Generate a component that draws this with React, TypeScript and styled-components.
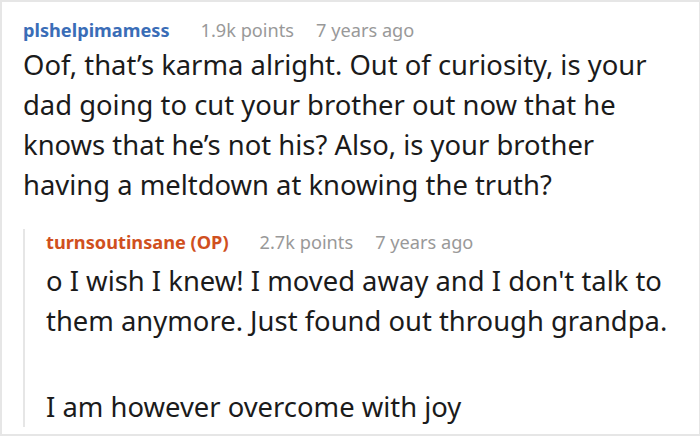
import React from "react";
import styled, { createGlobalStyle } from "styled-components";

const Global = createGlobalStyle`
  html, body { margin: 0; padding: 0; background: #fff; }
  body { font-family: "Noto Sans", "Open Sans", sans-serif; }
`;

const Frame = styled.div`
  box-sizing: border-box;
  width: 700px;
  height: 436px;
  border: 2px solid #e6e6e6;
  border-right-width: 1px;
  padding: 15px 20px 0 21px;
  overflow: hidden;
`;

const Meta = styled.div<{ $nested?: boolean }>`
  display: flex;
  align-items: baseline;
  gap: 22px;
  font-size: 18.2px;
  line-height: 26px;
  white-space: nowrap;
  margin-top: ${(p) => (p.$nested ? "-11px" : "0")};
`;

const Author = styled.span<{ $op?: boolean }>`
  font-weight: 700;
  color: ${(p) => (p.$op ? "#d0501e" : "#3a6db7")};
  margin-right: 9px;
`;

const Muted = styled.span`
  color: #999999;
`;

const Body = styled.div<{ $nested?: boolean }>`
  font-size: 27.4px;
  line-height: 40px;
  color: #1b1b1b;
  margin-top: ${(p) => (p.$nested ? "6px" : "2px")};
  margin-bottom: ${(p) => (p.$nested ? "-3px" : "0")};
`;

const Para = styled.p`
  margin: 0 0 46px 0;
  &:last-child { margin-bottom: 0; }
`;

const Reply = styled.div`
  margin-top: 35px;
  border-left: 2px solid #e6e6e6;
  padding-left: 21px;
`;

type C = {
  author: string;
  op?: boolean;
  nested?: boolean;
  points: string;
  age: string;
  paras: string[];
};

const Comment = ({ author, op, nested, points, age, paras }: C) => (
  <>
    <Meta $nested={nested}>
      <Author $op={op}>{author}</Author>
      <Muted>{points}</Muted>
      <Muted>{age}</Muted>
    </Meta>
    <Body $nested={nested}>
      {paras.map((t, i) => (
        <Para key={i}>{t}</Para>
      ))}
    </Body>
  </>
);

export default function App() {
  return (
    <>
      <Global />
      <Frame>
        <Comment
          author="plshelpimamess"
          points="1.9k points"
          age="7 years ago"
          paras={[
            "Oof, that’s karma alright. Out of curiosity, is your dad going to cut your brother out now that he knows that he’s not his? Also, is your brother having a meltdown at knowing the truth?",
          ]}
        />
        <Reply>
          <Comment
            author="turnsoutinsane (OP)"
            op
            nested
            points="2.7k points"
            age="7 years ago"
            paras={[
              "o I wish I knew! I moved away and I don't talk to them anymore. Just found out through grandpa.",
              "I am however overcome with joy",
            ]}
          />
        </Reply>
      </Frame>
    </>
  );
}
